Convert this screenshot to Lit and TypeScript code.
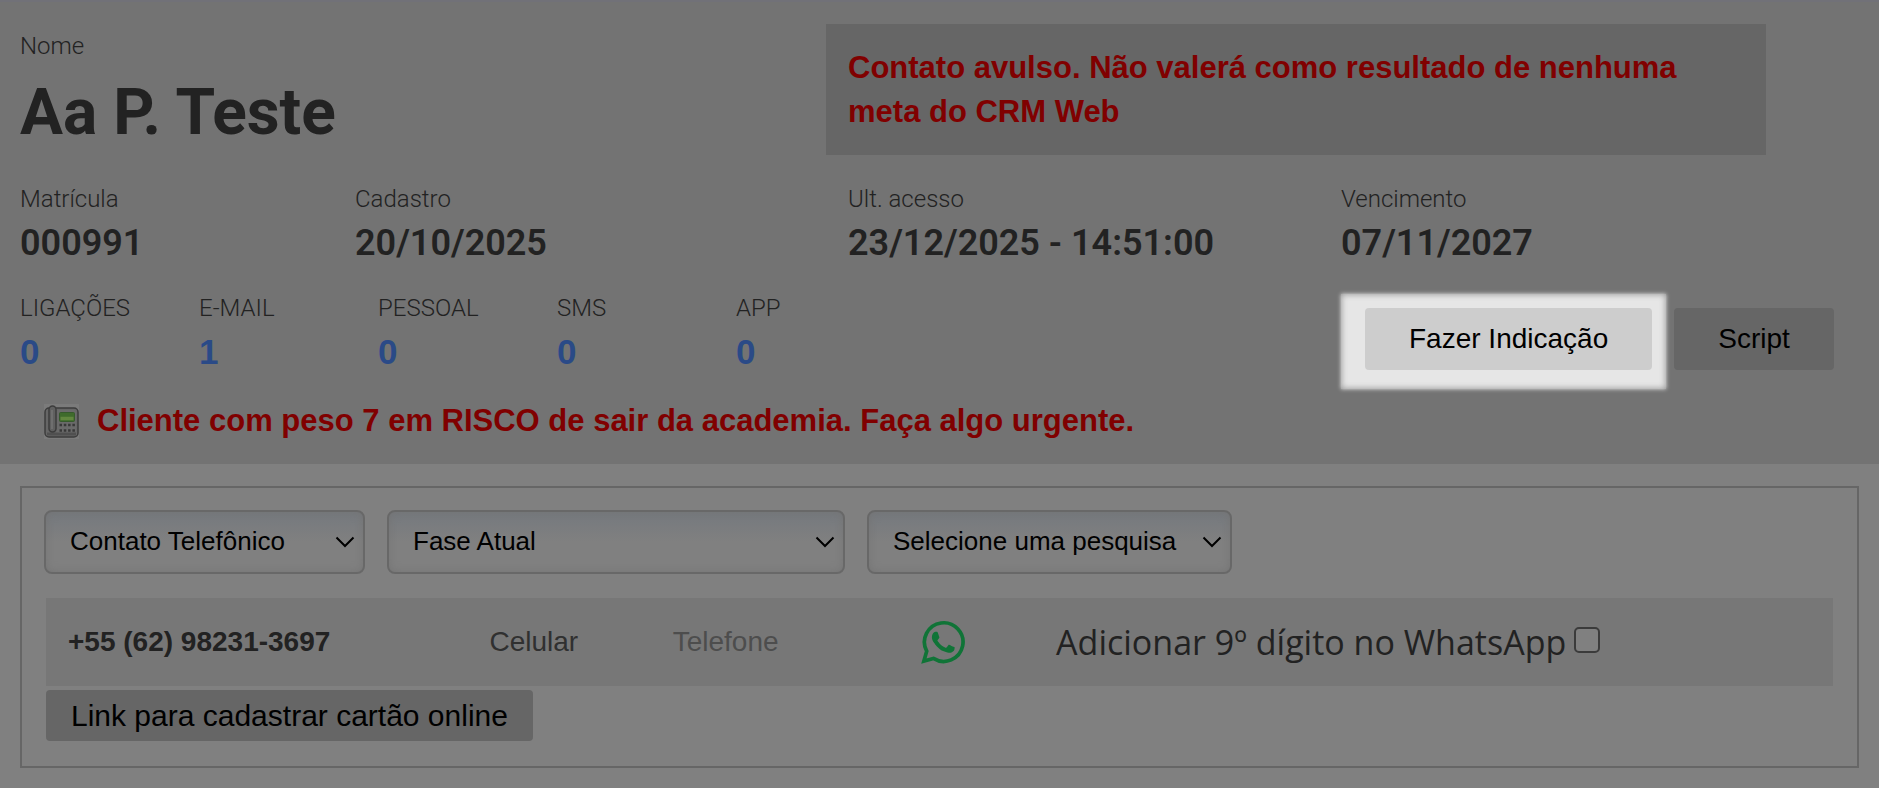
import { LitElement, html, css, svg } from "lit";
import { customElement } from "lit/decorators.js";

const phoneIcon = svg`
  <rect width="35" height="35" fill="#7b7b7b"/>
  <rect x="1" y="4" width="33" height="29" rx="4" fill="#666" stroke="#3c3c3c" stroke-width="1.500"/>
  <rect x="12" y="6" width="20" height="23" rx="2" fill="#6a6a6a"/>
  <path d="M3 30H32" stroke="#505050" stroke-width="3"/>
  <rect x="5" y="2" width="7" height="26" rx="3.500" fill="#606060" stroke="#3c3c3c" stroke-width="1.500"/>
  <path d="M8 6V25" stroke="#757575" stroke-width="1.500"/>
  <rect x="15.500" y="8.500" width="15" height="9" rx="1" fill="#3f6b2c" stroke="#365a2c"/>
  <path d="M16.500 14.500H29.500" stroke="#62873f" stroke-width="3.500"/>
  <path d="M15.500 21H31M15.500 26.500H31" stroke="#383838" stroke-width="2.500" stroke-dasharray="2.500 1.800"/>
`;

const whatsappIcon = svg`
  <path fill="none" stroke="#107437" stroke-width="3.700" stroke-linejoin="miter"
    d="M2.900 41 5.700 31.200A19.300 19.300 0 1 1 12.400 38.400Z"/>
  <path fill="#107437" d="M15.400 12.200c-.5-.9-1-.9-1.500-.9h-1.200c-.5 0-1.200.2-1.800.9-.7.700-2.300 2.300-2.300 5.400 0 3.200 2.300 6.300 2.700 6.700.3.400 4.500 7.200 11.100 9.800 5.500 2.100 6.600 1.700 7.800 1.600 1.200-.1 3.900-1.600 4.400-3.100.5-1.500.5-2.800.4-3.100-.2-.3-.6-.4-1.300-.7-.6-.4-3.900-1.900-4.500-2.200-.6-.2-1-.3-1.500.4-.4.600-1.700 2.100-2.100 2.600-.4.400-.8.500-1.400.2-.7-.4-2.800-1.100-5.300-3.300-2-1.800-3.300-3.900-3.700-4.600-.4-.6 0-1 .3-1.300l1-1.200c.3-.4.400-.6.700-1.100.2-.4.100-.8-.1-1.100z"
    transform="translate(3.500 2) scale(.86)"/>
`;

@customElement("app-root")
export class AppRoot extends LitElement {
  static styles = css`
    :host {
      display: block;
      min-height: 100vh;
      background: #808080;
      color: #222;
      font-family: "Liberation Sans", Arial, sans-serif;
    }
    * { box-sizing: border-box; }
    button, select { font: inherit; color: #000; margin: 0; }
    .header {
      background: #737373;
      border-top: 2px solid #717178;
      padding: 22px 20px 24px;
    }
    .cols {
      display: grid;
      grid-template-columns: 335fr 493fr 493fr 518fr;
    }
    .identity { grid-column: span 2; padding-top: 8px; }
    .label {
      font: 300 24px/28px Roboto, sans-serif;
      margin: 0;
    }
    .name {
      font: 700 64px/76px Roboto, sans-serif;
      margin: 15px 0 0;
    }
    .notice {
      grid-column: span 2;
      width: 93%;
      margin: 0 0 0 -22px;
      padding: 22px 22px 21px;
      background: #666;
      color: #800000;
      font-size: 31px;
      font-weight: 700;
      line-height: 44px;
    }
    .facts { margin-top: 30px; }
    .value {
      font: 600 36px/36px Roboto, sans-serif;
      margin: 12px 0 0;
    }
    .activity {
      display: grid;
      grid-template-columns: 1321fr 518fr;
      margin-top: 33px;
    }
    .stats {
      display: grid;
      grid-template-columns: repeat(5, 179fr) 426fr;
      align-items: start;
    }
    .count {
      display: block;
      margin-top: 10px;
      color: #2a4a87;
      font-size: 35px;
      font-weight: 700;
      line-height: 40px;
      text-decoration: none;
    }
    .actions { display: flex; align-items: center; gap: 8px; }
    .spot {
      padding: 14px 14px 19px 24px;
      background: #e6e6e6;
      box-shadow: 0 0 4px #e6e6e6, inset 0 0 6px #8c8c8c;
    }
    .btn {
      display: block;
      border: 0;
      border-radius: 4px;
      background: #666;
      font-size: 28px;
      line-height: 32px;
      padding: 15px 44px;
      white-space: nowrap;
    }
    .lit { background: #cdcdcd; }
    .script { margin-bottom: 5px; }
    .risk {
      display: flex;
      align-items: center;
      gap: 18px;
      margin: 13px 0 0 24px;
      color: #800000;
      font-size: 31px;
      font-weight: 700;
      line-height: 38px;
    }
    .phone { width: 35px; height: 35px; display: block; }
    .panel {
      margin: 22px 20px 20px;
      border: 2px solid #666;
      padding: 22px 22px 25px;
    }
    .filters { display: flex; gap: 22px; }
    .select {
      appearance: none;
      height: 64px;
      padding: 0 48px 2px 24px;
      border: 2px solid #686868;
      border-radius: 8px;
      font-size: 26px;
      background-color: #808080;
      background-image:
        url("data:image/svg+xml,%3Csvg xmlns='http://www.w3.org/2000/svg' width='20' height='12' viewBox='0 0 20 12'%3E%3Cpath d='M1.500 1.500 10 10l8.500-8.500' fill='none' stroke='%23000' stroke-width='2'/%3E%3C/svg%3E"),
        linear-gradient(#75797e, #808080 50%);
      background-repeat: no-repeat;
      background-position: right 8px center, 0 0;
      box-shadow: inset 0 0 8px #747474;
    }
    .kind { width: 321px; }
    .phase { width: 458px; }
    .survey { width: 365px; }
    .contact {
      display: grid;
      grid-template-columns: 421fr 183fr 248fr 135fr 776fr;
      align-items: center;
      min-height: 88px;
      margin: 24px 2px 4px;
      padding-left: 22px;
      background: #777;
      font-size: 28px;
      line-height: 32px;
    }
    .number { font-weight: 700; }
    .type { color: #303030; }
    .desc { color: #4d4d4d; }
    .whats { display: block; width: 44px; height: 44px; }
    .whats svg { display: block; }
    .digit {
      display: flex;
      align-items: center;
      gap: 8px;
      font: 400 34px/40px "Trebuchet MS", "Open Sans", sans-serif;
      white-space: nowrap;
    }
    .check {
      appearance: none;
      width: 26px;
      height: 26px;
      margin: 0 0 4px;
      border: 2px solid #3b3b3b;
      border-radius: 5px;
      background: #808080;
    }
    .card {
      margin-left: 2px;
      font-size: 30px;
      line-height: 35px;
      padding: 8px 25px;
    }
  `;

  private facts = [
    ["Matrícula", "000991"],
    ["Cadastro", "20/10/2025"],
    ["Ult. acesso", "23/12/2025 - 14:51:00"],
    ["Vencimento", "07/11/2027"],
  ];

  private stats = [
    ["LIGAÇÕES", "0"],
    ["E-MAIL", "1"],
    ["PESSOAL", "0"],
    ["SMS", "0"],
    ["APP", "0"],
  ];

  render() {
    return html`
      <header class="header">
        <div class="cols">
          <div class="identity">
            <p class="label">Nome</p>
            <h1 class="name">Aa P. Teste</h1>
          </div>
          <div class="notice">
            Contato avulso. Não valerá como resultado de nenhuma meta do CRM Web
          </div>
        </div>
        <div class="cols facts">
          ${this.facts.map(([label, value]) => html`
            <div>
              <p class="label">${label}</p>
              <p class="value">${value}</p>
            </div>`)}
        </div>
        <div class="activity">
          <div class="stats">
            ${this.stats.map(([label, value]) => html`
              <div>
                <p class="label">${label}</p>
                <a class="count" href="#" aria-label=${label}>${value}</a>
              </div>`)}
          </div>
          <div class="actions">
            <div class="spot"><button class="btn lit">Fazer Indicação</button></div>
            <button class="btn script">Script</button>
          </div>
        </div>
        <div class="risk">
          <svg class="phone" viewBox="0 0 35 35" aria-hidden="true">${phoneIcon}</svg>
          <span>Cliente com peso 7 em RISCO de sair da academia. Faça algo urgente.</span>
        </div>
      </header>
      <section class="panel">
        <div class="filters">
          <select class="select kind" aria-label="Tipo de contato">
            <option>Contato Telefônico</option>
          </select>
          <select class="select phase" aria-label="Fase">
            <option>Fase Atual</option>
          </select>
          <select class="select survey" aria-label="Pesquisa">
            <option>Selecione uma pesquisa</option>
          </select>
        </div>
        <div class="contact">
          <span class="number">+55 (62) 98231-3697</span>
          <span class="type">Celular</span>
          <span class="desc">Telefone</span>
          <a class="whats" href="#" aria-label="WhatsApp">
            <svg width="44" height="44" viewBox="0 0 44 44">${whatsappIcon}</svg>
          </a>
          <label class="digit">
            <span>Adicionar 9º dígito no WhatsApp</span>
            <input class="check" type="checkbox" />
          </label>
        </div>
        <button class="btn card">Link para cadastrar cartão online</button>
      </section>
    `;
  }
}
